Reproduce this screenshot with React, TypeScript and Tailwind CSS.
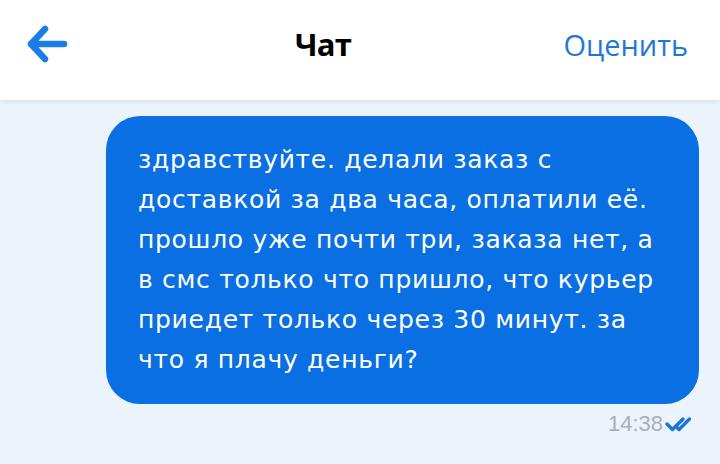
import React from 'react';

// ── Chat screen: header + one outgoing message ───────────────────────────────
const lines = [
  'здравствуйте. делали заказ с',
  'доставкой за два часа, оплатили её.',
  'прошло уже почти три, заказа нет, а',
  'в смс только что пришло, что курьер',
  'приедет только через 30 минут. за',
  'что я плачу деньги?',
];

function BackArrow() {
  return (
    <svg width="44" height="40" viewBox="0 0 44 40" fill="none">
      <path
        d="M5 20 H38 M19 5 L5 20 L19 35"
        stroke="#1a7de3"
        strokeWidth="6.5"
        strokeLinecap="round"
        strokeLinejoin="round"
      />
    </svg>
  );
}

function DoubleCheck() {
  return (
    <svg width="32" height="16" viewBox="0 0 32 16" fill="none">
      <path d="M3 8 L8.5 13.5 L19 3" stroke="#1b74d9" strokeWidth="3.4" strokeLinecap="round" strokeLinejoin="round" />
      <path d="M13 11.5 L15 13.5 L25.5 3" stroke="#1b74d9" strokeWidth="3.4" strokeLinecap="round" strokeLinejoin="round" />
    </svg>
  );
}

export default function App() {
  return (
    <div className="w-[720px] h-[464px] overflow-hidden flex flex-col bg-[#ebf3fc] font-['DejaVu_Sans',sans-serif]">
      {/* ── Header ─────────────────────────────────────────────────────── */}
      <div className="h-[100px] shrink-0 bg-white flex items-center pl-[26px] pr-[32px] pb-[12px] shadow-[0_2px_6px_rgba(0,0,0,0.08)] relative z-10">
        <BackArrow />
        <span className="ml-[225px] text-[31px] font-bold text-black leading-none tracking-tight font-['Open_Sans',sans-serif]">
          Чат
        </span>
        <div className="flex-1" />
        <span className="text-[29px] text-[#1f78d8] leading-none whitespace-nowrap font-['Open_Sans',sans-serif]">
          Оценить
        </span>
      </div>

      {/* ── Messages ───────────────────────────────────────────────────── */}
      <div className="flex-1 flex flex-col items-end pr-[21px] pt-[16px]">
        <div className="w-[593px] bg-[#0a6fe2] rounded-[34px] pl-[32px] pr-[16px] py-[24px] text-white text-[25px] leading-[40px] tracking-[0.7px]">
          {lines.map((l, i) => (
            <div key={i} className="whitespace-nowrap">{l}</div>
          ))}
        </div>
        <div className="flex items-center gap-[1px] mt-[9px] mr-[3px]">
          <span className="text-[22px] text-[#a9b0b8] leading-none font-['Liberation_Sans',sans-serif]">14:38</span>
          <DoubleCheck />
        </div>
      </div>
    </div>
  );
}
